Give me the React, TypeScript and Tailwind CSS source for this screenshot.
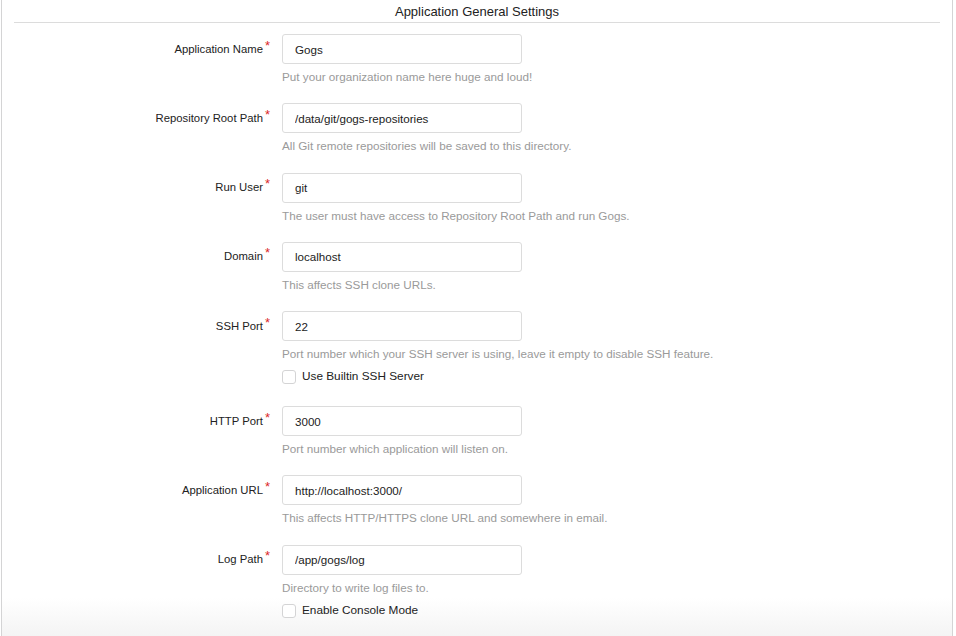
import React from 'react';

type Field = {
  label: string;
  value: string;
  help: string;
  checkbox?: string;
};

const fields: Field[] = [
  { label: 'Application Name', value: 'Gogs', help: 'Put your organization name here huge and loud!' },
  { label: 'Repository Root Path', value: '/data/git/gogs-repositories', help: 'All Git remote repositories will be saved to this directory.' },
  { label: 'Run User', value: 'git', help: 'The user must have access to Repository Root Path and run Gogs.' },
  { label: 'Domain', value: 'localhost', help: 'This affects SSH clone URLs.' },
  {
    label: 'SSH Port',
    value: '22',
    help: 'Port number which your SSH server is using, leave it empty to disable SSH feature.',
    checkbox: 'Use Builtin SSH Server',
  },
  { label: 'HTTP Port', value: '3000', help: 'Port number which application will listen on.' },
  { label: 'Application URL', value: 'http://localhost:3000/', help: 'This affects HTTP/HTTPS clone URL and somewhere in email.' },
  { label: 'Log Path', value: '/app/gogs/log', help: 'Directory to write log files to.', checkbox: 'Enable Console Mode' },
];

const FieldRow = ({ field }: { field: Field }) => {
  return (
    <div className={field.checkbox ? 'pb-[21px]' : 'pb-[19.3px]'}>
      <div className="flex">
        <div className="flex h-[30px] w-[268px] items-center justify-end text-[11.3px] text-[#222]">
          <span>{field.label}</span>
          <span className="relative -top-[4px] ml-[2px] text-[13px] leading-none text-[#db2828]">*</span>
        </div>
        <div className="ml-[12px] w-[240px]">
          <input
            readOnly
            value={field.value}
            className="h-[30px] w-full rounded-[3px] border border-[#dcdcdc] bg-white px-[12px] text-[11.6px] text-[#222] outline-none"
          />
        </div>
      </div>
      <div className="ml-[280px]">
        <div className="mt-[6px] whitespace-nowrap text-[11.7px] leading-[14px] text-[#9a9a9a]">{field.help}</div>
        {field.checkbox && (
          <label className="mt-[8px] flex h-[16px] items-center">
            <span className="h-[14px] w-[14px] rounded-[3px] border border-[#d4d4d5] bg-white" />
            <span className="ml-[6px] text-[11.8px] text-[#222]">{field.checkbox}</span>
          </label>
        )}
      </div>
    </div>
  );
};

const App = () => {
  return (
    <div
      className="min-h-[636px] w-[956px] bg-white"
      style={{ fontFamily: '"Helvetica Neue", Helvetica, "Liberation Sans", Arial, sans-serif' }}
    >
      <div className="ml-[1px] min-h-[636px] w-[952px] border-x border-[#d4d4d5] bg-[linear-gradient(to_bottom,#ffffff_0px,#ffffff_598px,#f4f4f4_636px)]">
        <div className="mx-[12px] flex h-[23px] items-center justify-center border-b border-[#dcdcdc] pt-[2px] text-[13px] text-[#222]">
          Application General Settings
        </div>
        <form className="pt-[11px]">
          {fields.map((field) => (
            <FieldRow key={field.label} field={field} />
          ))}
        </form>
      </div>
    </div>
  );
};

export default App;
